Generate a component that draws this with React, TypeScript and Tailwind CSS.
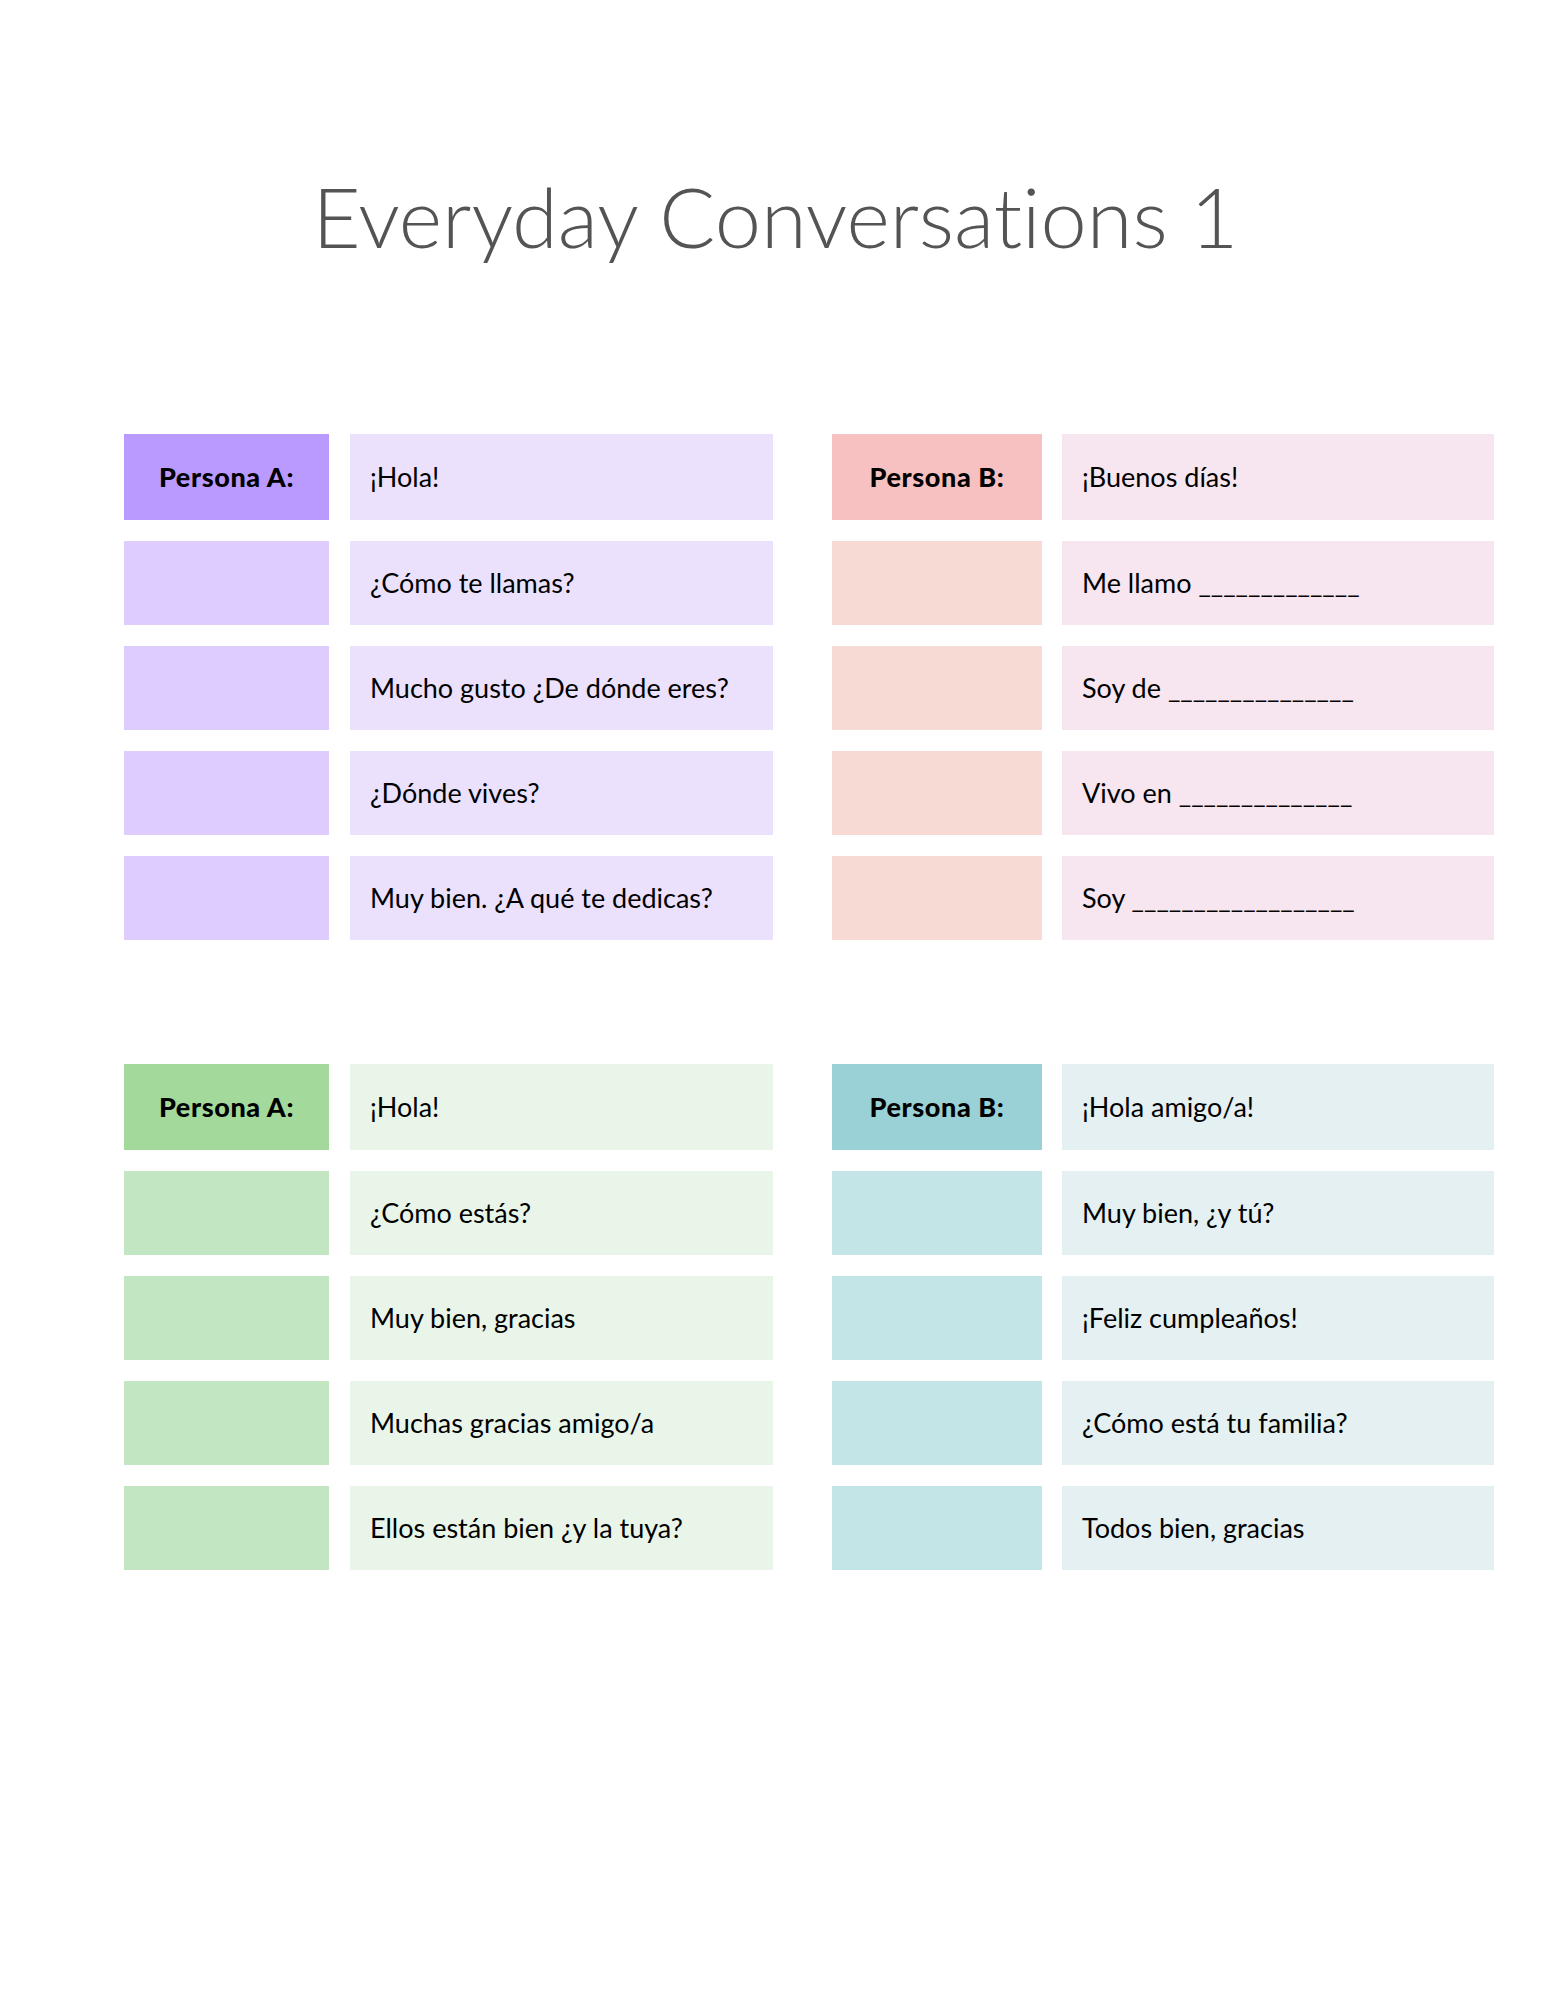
import React from "react";

const sec1A = ["¡Hola!", "¿Cómo te llamas?", "Mucho gusto ¿De dónde eres?", "¿Dónde vives?", "Muy bien. ¿A qué te dedicas?"];
const sec1B = ["¡Buenos días!", "Me llamo _____________", "Soy de _______________", "Vivo en ______________", "Soy __________________"];
const sec2A = ["¡Hola!", "¿Cómo estás?", "Muy bien, gracias", "Muchas gracias amigo/a", "Ellos están bien ¿y la tuya?"];
const sec2B = ["¡Hola amigo/a!", "Muy bien, ¿y tú?", "¡Feliz cumpleaños!", "¿Cómo está tu familia?", "Todos bien, gracias"];

function Block({
  label,
  rows,
  headBg,
  sideBg,
  textBg,
  headW,
  textW,
  gapX,
}: {
  label: string;
  rows: string[];
  headBg: string;
  sideBg: string;
  textBg: string;
  headW: string;
  textW: string;
  gapX: string;
}) {
  return (
    <div className="flex flex-col gap-[21px]">
      {rows.map((t, i) => (
        <div key={i} className={`flex ${gapX} ${i === 0 ? "h-[86px]" : "h-[84px]"}`}>
          <div className={`${headW} ${i === 0 ? headBg : sideBg} flex items-center justify-center`}>
            {i === 0 && (
              <span
                className="text-[27px] font-black text-black tracking-[0.6px]"
                style={{ fontFamily: "Lato, 'Liberation Sans', sans-serif" }}
              >
                {label}
              </span>
            )}
          </div>
          <div className={`${textW} ${textBg} flex items-center pl-[20px]`}>
            <span
              className="text-[27px] text-black [font-variant-ligatures:none]"
              style={{ fontFamily: "Lato, 'Liberation Sans', sans-serif" }}
            >
              {t}
            </span>
          </div>
        </div>
      ))}
    </div>
  );
}

export default function App() {
  return (
    <div className="w-[1545px] h-[2000px] bg-white">
      <div className="h-[434px] pt-[166px] flex justify-center pl-[6px]">
        <h1
          className="text-[83px] leading-[100px] font-light text-[#545454] h-[100px] [font-variant-ligatures:none]"
          style={{ fontFamily: "Lato, 'Liberation Sans', sans-serif" }}
        >
          Everyday Conversations 1
        </h1>
      </div>
      <div className="flex flex-col gap-[124px] pl-[124px]">
        <div className="flex gap-[59px]">
          <Block label="Persona A:" rows={sec1A} headBg="bg-[#bb9aff]" sideBg="bg-[#dfccfe]" textBg="bg-[#ebe1fd]" headW="w-[205px]" textW="w-[423px]" gapX="gap-[21px]" />
          <Block label="Persona B:" rows={sec1B} headBg="bg-[#f8c1c1]" sideBg="bg-[#f8dad5]" textBg="bg-[#f7e5ef]" headW="w-[210px]" textW="w-[432px]" gapX="gap-[20px]" />
        </div>
        <div className="flex gap-[59px]">
          <Block label="Persona A:" rows={sec2A} headBg="bg-[#a3d99b]" sideBg="bg-[#c2e6c1]" textBg="bg-[#eaf5ea]" headW="w-[205px]" textW="w-[423px]" gapX="gap-[21px]" />
          <Block label="Persona B:" rows={sec2B} headBg="bg-[#9ad1d6]" sideBg="bg-[#c3e5e7]" textBg="bg-[#e4f0f2]" headW="w-[210px]" textW="w-[432px]" gapX="gap-[20px]" />
        </div>
      </div>
    </div>
  );
}
